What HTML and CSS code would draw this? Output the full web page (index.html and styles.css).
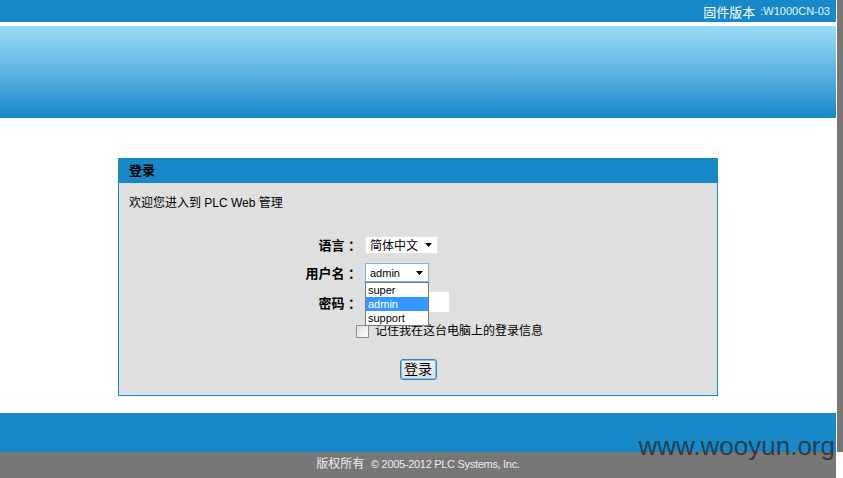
FILE: index.html
```html
<!DOCTYPE html>
<html>
<head>
  <meta charset="utf-8">
  <link rel="stylesheet" href="styles.css">
</head>
<body>
  <div class="page">
    <div class="main">
      <div class="topbar">
        <span class="fw-label">固件版本</span>
        <span class="fw-ver">:W1000CN-03</span>
      </div>
      <div class="banner"></div>

      <div class="content">
        <div class="login-box">
          <div class="login-head">登录</div>
          <div class="login-body">
            <div class="welcome">欢迎您进入到 PLC Web 管理</div>

            <div class="form">
              <div class="label">语言 ：</div>
              <div class="field">
                <div class="select select-lang">
                  <span>简体中文</span>
                  <svg class="arrow" width="7" height="4" viewBox="0 0 7 4"><path d="M0 0h7L3.5 4z" fill="#000"/></svg>
                </div>
              </div>

              <div class="label">用户名 ：</div>
              <div class="field">
                <div class="select select-user">
                  <span>admin</span>
                  <svg class="arrow" width="7" height="4" viewBox="0 0 7 4"><path d="M0 0h7L3.5 4z" fill="#000"/></svg>
                  <ul class="dropdown">
                    <li>super</li>
                    <li class="active">admin</li>
                    <li>support</li>
                  </ul>
                </div>
              </div>

              <div class="label label-pwd">密码 ：</div>
              <div class="field">
                <div class="input"></div>
              </div>
            </div>

            <div class="remember">
              <span class="checkbox"></span>
              <span>记住我在这台电脑上的登录信息</span>
            </div>

            <div class="actions">
              <button class="btn">登录</button>
            </div>
          </div>
        </div>
      </div>

      <div class="footbar"></div>
    </div>
    <div class="side-strip"></div>
  </div>
  <div class="copyright">版权所有 &nbsp;<span class="copy-en">© 2005-2012 PLC Systems, Inc.</span></div>
  <div class="watermark">www.wooyun.org</div>
</body>
</html>
```

FILE: styles.css
```css
/* Base Layout */
body {
  margin: 0;
  background: #fff;
  font-family: "Liberation Sans", "Noto Sans CJK SC", sans-serif;
  font-size: 12px;
  color: #000;
  position: relative;
  height: 478px;
  overflow: hidden;
}

.page {
  display: flex;
  gap: 1px;
}

.main {
  width: 836px;
}

.side-strip {
  flex: 1;
  background: #777;
}

/* Header */
.topbar {
  height: 22px;
  background: #1788c8;
  color: #fff;
  display: flex;
  justify-content: flex-end;
  align-items: center;
  gap: 5px;
  padding-right: 6px;
}

.fw-label {
  font-size: 13px;
}

.fw-ver {
  font-size: 11px;
  color: #e8f4fb;
}

.banner {
  margin-top: 4px;
  height: 92px;
  background: linear-gradient(#9cdcf6, #5cb4e2 50%, #1687c7);
}

/* Login box */
.content {
  padding: 40px 0 17px;
  display: flex;
  justify-content: center;
}

.login-box {
  width: 598px;
  height: 236px;
  border: 1px solid #1788c8;
  background: #dfdfdf;
  display: flex;
  flex-direction: column;
}

.login-head {
  height: 24px;
  background: #1788c8;
  font-weight: bold;
  font-size: 13px;
  line-height: 24px;
  padding-left: 10px;
}

.login-body {
  flex: 1;
}

.welcome {
  padding: 12px 0 0 10px;
  line-height: 16px;
}

.form {
  display: grid;
  grid-template-columns: 242px auto;
  column-gap: 4px;
  margin-top: 24px;
  align-items: center;
}

.label {
  text-align: right;
  font-weight: bold;
  font-size: 13px;
}

.field {
  display: flex;
}

.form .field:nth-child(4),
.form .label:nth-child(3) {
  margin-top: 9px;
}

.form .field:nth-child(6),
.form .label:nth-child(5) {
  margin-top: 9px;
}

.select {
  position: relative;
  background: #fff;
  display: flex;
  align-items: center;
  justify-content: space-between;
  padding: 0 5px 0 4px;
  box-sizing: border-box;
}

.select-lang {
  width: 73px;
  height: 18px;
  border: 1px solid #e4e4e4;
  font-size: 12px;
}

.select-user {
  width: 64px;
  height: 19px;
  border: 1px solid #7eb4ea;
  font-size: 11px;
}

.dropdown {
  position: absolute;
  top: 18px;
  left: -1px;
  width: 64px;
  margin: 0;
  padding: 0;
  list-style: none;
  background: #fff;
  border: 1px solid #7a7a7a;
  box-sizing: border-box;
  z-index: 5;
}

.dropdown li {
  height: 14px;
  line-height: 14px;
  padding-left: 2px;
  font-size: 11px;
}

.dropdown li.active {
  background: #3399ff;
  color: #fff;
}

.input {
  width: 85px;
  height: 22px;
  background: #fff;
  border: 1px solid #e2e2e2;
  box-sizing: border-box;
}

.remember {
  display: flex;
  align-items: center;
  gap: 6px;
  padding-left: 237px;
  margin-top: 11px;
  line-height: 14px;
}

.checkbox {
  width: 11px;
  height: 11px;
  border: 1px solid #8f8f8f;
  background: linear-gradient(135deg, #dcdcdc, #fff);
}

.actions {
  display: flex;
  justify-content: center;
  margin-top: 21px;
}

.btn {
  width: 37px;
  height: 21px;
  padding: 0;
  font-family: inherit;
  font-size: 14px;
  line-height: 17px;
  border: 1px solid #3c7fb1;
  border-radius: 3px;
  background: linear-gradient(#f4f4f4, #dcdcdc);
  box-shadow: inset 0 0 0 1px #6fc8f1;
}

/* Footer */
.footbar {
  height: 39px;
  background: #1788c8;
}

.copyright {
  height: 26px;
  line-height: 24px;
  background: #777;
  color: #eee;
  font-size: 12px;
  width: 836px;
  text-align: center;
}

.copy-en {
  font-size: 11px;
  letter-spacing: -0.3px;
}

.watermark {
  position: absolute;
  right: 8px;
  top: 431px;
  font-size: 26px;
  color: rgba(40, 40, 40, 0.8);
}
```
